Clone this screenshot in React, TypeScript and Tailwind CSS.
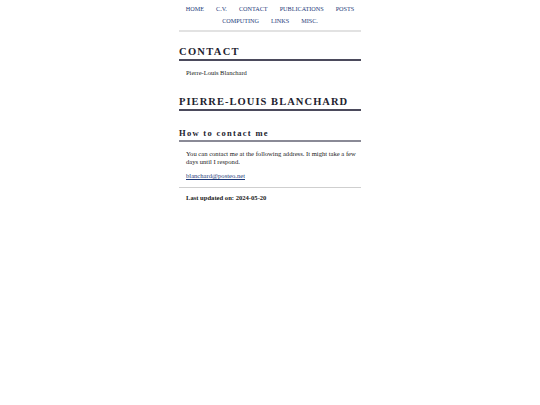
const navTop = ['HOME', 'C.V.', 'CONTACT', 'PUBLICATIONS', 'POSTS']
const navBottom = ['COMPUTING', 'LINKS', 'MISC.']

function NavRow({ items }: { items: string[] }) {
  return (
    <div className="flex justify-center gap-x-[12px]">
      {items.map((item) => (
        <a key={item} href="#" className="text-[#1e3a7a] leading-[12px]">
          {item}
        </a>
      ))}
    </div>
  )
}

export default function App() {
  return (
    <div
      className="min-h-screen bg-white text-[#1a1a1a]"
      style={{ fontFamily: '"Liberation Serif", "DejaVu Serif", serif' }}
    >
      <div className="mx-auto w-[182px] pt-[3px]">
        <nav className="text-[6.2px] border-b-2 border-[#e2e2e2] pb-[3px]">
          <NavRow items={navTop} />
          <NavRow items={navBottom} />
        </nav>

        <h1 className="mt-[14px] border-b-2 border-[#4b4a5c] pb-[1px] text-[10.5px] font-bold tracking-[1.3px] leading-[12px] text-[#22222e]">
          CONTACT
        </h1>
        <p className="mt-[8px] pl-[7px] text-[6.5px] leading-[8px]">Pierre-Louis Blanchard</p>

        <h1 className="mt-[19px] border-b-2 border-[#4b4a5c] pb-[1px] text-[10.5px] font-bold tracking-[1.05px] leading-[12px] text-[#22222e]">
          PIERRE-LOUIS BLANCHARD
        </h1>

        <h2 className="mt-[17px] border-b-2 border-[#8a8a96] pb-[1px] text-[8.5px] font-bold tracking-[1.3px] leading-[11px] text-[#22222e]">
          How to contact me
        </h2>

        <div className="pl-[7px] text-[6.6px] leading-[8px]">
          <p className="mt-[8px]">
            You can contact me at the following address. It might take a few days until I respond.
          </p>
          <p className="mt-[6px]">
            <a href="#" className="text-[#1e3a7a] underline">
              blanchard@posteo.net
            </a>
          </p>
        </div>

        <div className="mt-[7px] border-b border-[#cfcfcf]" />
        <p className="mt-[6px] pl-[7px] text-[6.6px] font-bold leading-[8px]">Last updated on: 2024-05-20</p>
      </div>
    </div>
  )
}
